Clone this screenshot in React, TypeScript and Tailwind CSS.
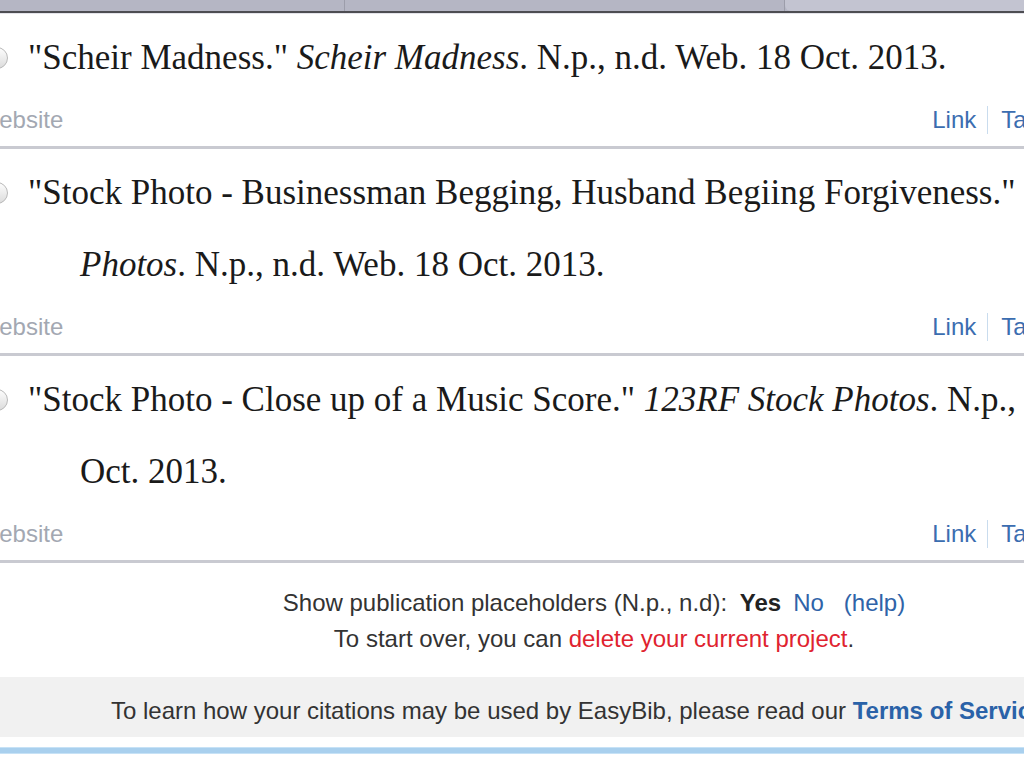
import React from "react";

const serif = { fontFamily: '"Liberation Serif", "Times New Roman", serif' };

type Entry = { lines: React.ReactNode[] };

const ENTRIES: Entry[] = [
  {
    lines: [
      <>
        "Scheir Madness." <i>Scheir Madness</i>. N.p., n.d. Web. 18 Oct. 2013.
      </>,
    ],
  },
  {
    lines: [
      <>"Stock Photo - Businessman Begging, Husband Begiing Forgiveness." 123RF Stock</>,
      <>
        <i>Photos</i>. N.p., n.d. Web. 18 Oct. 2013.
      </>,
    ],
  },
  {
    lines: [
      <>
        "Stock Photo - Close up of a Music Score." <i>123RF Stock Photos</i>. N.p., n.d. Web. 18
      </>,
      <>Oct. 2013.</>,
    ],
  },
];

function Citation({ entry }: { entry: Entry }) {
  return (
    <div className="border-b-[3px] border-[#c9cad1] pt-[8px] pb-[12px]">
      <div className="flex items-start">
        <div className="w-[28px] shrink-0 flex justify-start pt-[25px]">
          <span className="-ml-[14px] block w-[22px] h-[22px] rounded-full border border-[#b9b9b9] bg-gradient-to-b from-[#fdfdfd] to-[#dcdcdc]" />
        </div>
        <div
          className="text-[35px] leading-[72px] text-[#1a1a1a] whitespace-nowrap"
          style={serif}
        >
          {entry.lines.map((l, i) => (
            <div key={i} className={i > 0 ? "pl-[52px]" : ""}>
              {l}
            </div>
          ))}
        </div>
      </div>
      <div className="mt-[12px] flex items-center justify-between text-[24px] leading-[26px] font-['Liberation_Sans',Arial,sans-serif]">
        <span className="-ml-[23px] text-[#a3a8b2]">Website</span>
        <div className="flex items-center -mr-[16px]">
          <span className="text-[#3b6db0]">Link</span>
          <span className="ml-[11px] mr-[13px] w-px h-[28px] bg-[#c9dcee]" />
          <span className="text-[#3b6db0]">Tag</span>
        </div>
      </div>
    </div>
  );
}

export default function App() {
  return (
    <div className="w-[1024px] h-[768px] overflow-hidden bg-white relative">
      <div className="flex h-[11px] bg-[#b5b6c4]">
        <div className="w-[345px] border-r border-[#9c9daa]" />
        <div className="w-[440px] border-r border-[#9c9daa] rounded-bl-[6px]" />
        <div className="flex-1 bg-[#c3c4d1] rounded-bl-[6px]" />
      </div>
      <div className="h-[2px] bg-[#4d4d52]" />
      <div className="h-[1px] bg-[#e4e4ea]" />

      <div>
        {ENTRIES.map((e, i) => (
          <Citation key={i} entry={e} />
        ))}
      </div>

      <div className="font-['Liberation_Sans',Arial,sans-serif] text-[24px] text-[#333]">
        <div className="-ml-[40px] w-[1268px] text-center pt-[22px]">
          <div className="leading-[36px]">
            Show publication placeholders (N.p., n.d):{" "}
            <b className="text-[#222] ml-[6px]">Yes</b>
            <span className="text-[#2f63a8] ml-[12px]">No</span>
            <span className="text-[#2f63a8] ml-[20px]">(help)</span>
          </div>
          <div className="leading-[36px]">
            To start over, you can <span className="text-[#e0232f]">delete your current project</span>.
          </div>
        </div>
        <div className="mt-[20px] h-[60px] bg-[#f1f1f1] overflow-hidden">
          <div className="-ml-[40px] w-[1242px] text-center leading-[60px] pt-[4px] whitespace-nowrap">
            To learn how your citations may be used by EasyBib, please read our{" "}
            <b className="text-[#2a62a8]">Terms of Service</b>.
          </div>
        </div>
      </div>
      <div className="mt-[10px] h-[7px] bg-[#a9d0ee] border-t border-[#c7e2f6] border-b" />
    </div>
  );
}
